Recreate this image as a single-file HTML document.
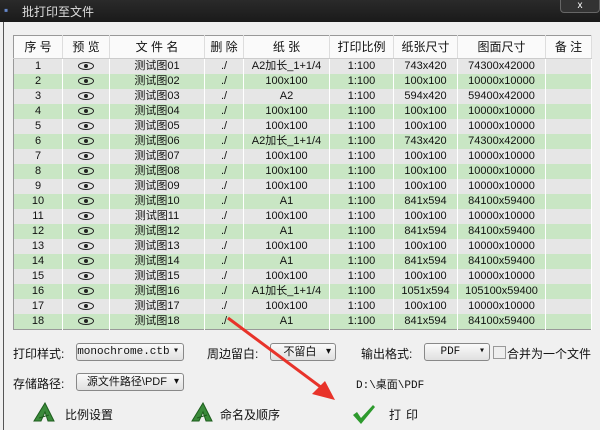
<!DOCTYPE html><html><head><meta charset="utf-8"><style>
body{margin:0;width:600px;height:430px;overflow:hidden;background:#f0f0f0;font-family:"Liberation Sans","Noto Sans CJK SC",sans-serif;font-size:12px;color:#111;position:relative}
.tb{position:absolute;left:0;top:0;width:600px;height:22px;background:linear-gradient(#2a2a2a,#1a1a1a);color:#ddd;font-size:12px}
.win{position:absolute;left:3px;top:22px;width:594px;height:408px;background:#f0f0f0;border-left:1px solid #555}
table{position:absolute;left:13px;top:35px;border-collapse:collapse;font-size:11px;table-layout:fixed;border:1px solid #999}
td,th{height:15px;padding:0;text-align:center;border-right:1px solid #fff;white-space:nowrap;overflow:hidden;line-height:15px}
th{height:22px;background:#fafafa;font-weight:normal;font-size:12px;border-right:1px solid #ddd;border-bottom:1px solid #ccc}
tr.o td{background:#e6e6e6}tr.e td{background:#c9e6c4}
i{display:inline-block;width:14px;height:6px;border:1px solid #222;border-radius:50%;position:relative;vertical-align:middle}
i:after{content:"";position:absolute;left:5px;top:1px;width:4px;height:4px;border-radius:50%;background:#222}
.sel{position:absolute;height:16px;border:1px solid #888;border-radius:3px;background:linear-gradient(#fafafa,#e0e0e0);font-size:11px;line-height:16px;text-align:center;font-family:"Liberation Mono","Noto Sans CJK SC",monospace}
.sel:after{content:"▾";position:absolute;right:4px;top:0;font-size:10px}
.l{position:absolute;font-size:12px}
</style></head><body>
<div class="tb"><span style="position:absolute;left:4px;top:3px;color:#68c">▪</span><span style="position:absolute;left:22px;top:3px">批打印至文件</span>
<div style="position:absolute;left:560px;top:-1px;width:38px;height:12px;border:1px solid #666;border-radius:0 0 4px 4px;background:#333;color:#fff;font-size:10px;text-align:center;line-height:12px">x</div></div>
<div class="win"></div>
<table>
<colgroup><col style="width:49px"><col style="width:47px"><col style="width:95px"><col style="width:39px"><col style="width:86px"><col style="width:64px"><col style="width:64px"><col style="width:88px"><col style="width:46px"></colgroup>
<tr><th>序 号</th><th>预 览</th><th>文 件 名</th><th>删 除</th><th>纸 张</th><th>打印比例</th><th>纸张尺寸</th><th>图面尺寸</th><th>备 注</th></tr>
<tr class="o"><td>1</td><td><i></i></td><td>测试图01</td><td>./</td><td>A2加长_1+1/4</td><td>1:100</td><td>743x420</td><td>74300x42000</td><td></td></tr>
<tr class="e"><td>2</td><td><i></i></td><td>测试图02</td><td>./</td><td>100x100</td><td>1:100</td><td>100x100</td><td>10000x10000</td><td></td></tr>
<tr class="o"><td>3</td><td><i></i></td><td>测试图03</td><td>./</td><td>A2</td><td>1:100</td><td>594x420</td><td>59400x42000</td><td></td></tr>
<tr class="e"><td>4</td><td><i></i></td><td>测试图04</td><td>./</td><td>100x100</td><td>1:100</td><td>100x100</td><td>10000x10000</td><td></td></tr>
<tr class="o"><td>5</td><td><i></i></td><td>测试图05</td><td>./</td><td>100x100</td><td>1:100</td><td>100x100</td><td>10000x10000</td><td></td></tr>
<tr class="e"><td>6</td><td><i></i></td><td>测试图06</td><td>./</td><td>A2加长_1+1/4</td><td>1:100</td><td>743x420</td><td>74300x42000</td><td></td></tr>
<tr class="o"><td>7</td><td><i></i></td><td>测试图07</td><td>./</td><td>100x100</td><td>1:100</td><td>100x100</td><td>10000x10000</td><td></td></tr>
<tr class="e"><td>8</td><td><i></i></td><td>测试图08</td><td>./</td><td>100x100</td><td>1:100</td><td>100x100</td><td>10000x10000</td><td></td></tr>
<tr class="o"><td>9</td><td><i></i></td><td>测试图09</td><td>./</td><td>100x100</td><td>1:100</td><td>100x100</td><td>10000x10000</td><td></td></tr>
<tr class="e"><td>10</td><td><i></i></td><td>测试图10</td><td>./</td><td>A1</td><td>1:100</td><td>841x594</td><td>84100x59400</td><td></td></tr>
<tr class="o"><td>11</td><td><i></i></td><td>测试图11</td><td>./</td><td>100x100</td><td>1:100</td><td>100x100</td><td>10000x10000</td><td></td></tr>
<tr class="e"><td>12</td><td><i></i></td><td>测试图12</td><td>./</td><td>A1</td><td>1:100</td><td>841x594</td><td>84100x59400</td><td></td></tr>
<tr class="o"><td>13</td><td><i></i></td><td>测试图13</td><td>./</td><td>100x100</td><td>1:100</td><td>100x100</td><td>10000x10000</td><td></td></tr>
<tr class="e"><td>14</td><td><i></i></td><td>测试图14</td><td>./</td><td>A1</td><td>1:100</td><td>841x594</td><td>84100x59400</td><td></td></tr>
<tr class="o"><td>15</td><td><i></i></td><td>测试图15</td><td>./</td><td>100x100</td><td>1:100</td><td>100x100</td><td>10000x10000</td><td></td></tr>
<tr class="e"><td>16</td><td><i></i></td><td>测试图16</td><td>./</td><td>A1加长_1+1/4</td><td>1:100</td><td>1051x594</td><td>105100x59400</td><td></td></tr>
<tr class="o"><td>17</td><td><i></i></td><td>测试图17</td><td>./</td><td>100x100</td><td>1:100</td><td>100x100</td><td>10000x10000</td><td></td></tr>
<tr class="e"><td>18</td><td><i></i></td><td>测试图18</td><td>./</td><td>A1</td><td>1:100</td><td>841x594</td><td>84100x59400</td><td></td></tr>
</table>
<div class="l" style="left:13px;top:345px">打印样式:</div>
<div class="sel" style="left:76px;top:343px;width:106px">monochrome.ctb&nbsp;&nbsp;</div>
<div class="l" style="left:207px;top:345px">周边留白:</div>
<div class="sel" style="left:270px;top:343px;width:64px;font-family:'Liberation Sans','Noto Sans CJK SC',sans-serif">不留白&nbsp;&nbsp;</div>
<div class="l" style="left:361px;top:345px">输出格式:</div>
<div class="sel" style="left:424px;top:343px;width:64px">PDF&nbsp;&nbsp;</div>
<div style="position:absolute;left:493px;top:346px;width:11px;height:11px;border:1px solid #999;background:#eee"></div>
<div class="l" style="left:507px;top:345px">合并为一个文件</div>
<div class="l" style="left:13px;top:375px">存储路径:</div>
<div class="sel" style="left:76px;top:373px;width:106px;font-family:'Liberation Sans','Noto Sans CJK SC',sans-serif">源文件路径\PDF&nbsp;&nbsp;</div>
<div class="l" style="left:356px;top:376px;font-size:11px;font-family:'Liberation Mono','Noto Sans CJK SC',monospace">D:\桌面\PDF</div>
<svg style="position:absolute;left:33px;top:402px" width="22" height="20"><path d="M1 19 L12 1 L21 19 L15 19 L12 10 L8 19Z M6 16 L16 13" fill="#3a8a3a" stroke="#1d5d1d" stroke-width="1"/></svg>
<div class="l" style="left:65px;top:406px">比例设置</div>
<svg style="position:absolute;left:191px;top:402px" width="22" height="20"><path d="M1 19 L12 1 L21 19 L15 19 L12 10 L8 19Z M6 16 L16 13" fill="#3a8a3a" stroke="#1d5d1d" stroke-width="1"/></svg>
<div class="l" style="left:220px;top:406px">命名及顺序</div>
<svg style="position:absolute;left:352px;top:403px" width="24" height="22"><path d="M1 12 L5 9 L9 15 L21 2 L23 4 L9 21Z" fill="#2d9a2d"/></svg>
<div class="l" style="left:389px;top:406px;letter-spacing:5px">打印</div>
<svg style="position:absolute;left:0;top:0" width="600" height="430"><path d="M228 318 L322 388" stroke="#e8332a" stroke-width="3"/><path d="M335 400 L312 394 L325 381Z" fill="#e8332a"/></svg>
</body></html>
